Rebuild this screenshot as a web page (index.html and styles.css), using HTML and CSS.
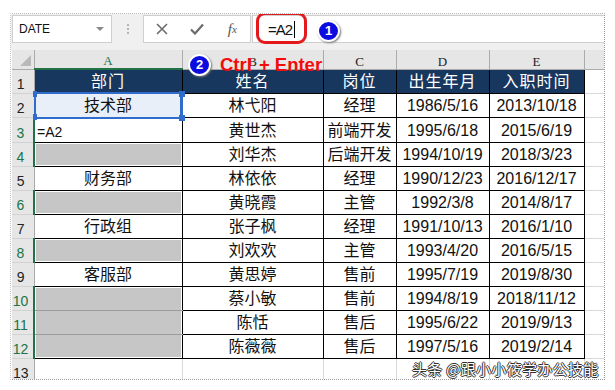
FILE: index.html
```html
<!DOCTYPE html>
<html lang="zh-CN">

<head>
    <meta charset="UTF-8">
    <title>Ctrl+Enter 批量填充</title>
    <link rel="stylesheet" href="styles.css">
</head>

<body>
    <!-- 截图外框 -->
    <div class="shot">
        <!-- 名称框 + 编辑栏 -->
        <div class="toolbar">
            <div class="namebox"><span>DATE</span><i class="caret"></i></div>
            <div class="grip"><i></i><i></i><i></i></div>
            <div class="fxbtns">
                <span class="btn">
                    <svg width="12" height="12" viewBox="0 0 12 12"><path d="M1 1 L11 11 M11 1 L1 11" stroke="#6b6b6b" stroke-width="1.6" fill="none"/></svg>
                </span>
                <span class="btn">
                    <svg width="14" height="12" viewBox="0 0 14 12"><path d="M1 6.5 L5 10.5 L13 1.5" stroke="#6b6b6b" stroke-width="2.2" fill="none"/></svg>
                </span>
                <span class="btn fx">f<sub>x</sub></span>
            </div>
            <div class="formula"><span>=A2</span><i class="cursor"></i></div>
        </div>

        <!-- 表格区域 -->
        <table class="grid">
            <colgroup>
                <col style="width:22px">
                <col style="width:148px">
                <col style="width:141px">
                <col style="width:73px">
                <col style="width:93px">
                <col style="width:95px">
                <col style="width:30px">
            </colgroup>
            <tr class="colhead">
                <th class="corner"></th>
                <th class="on">A</th>
                <th>B</th>
                <th>C</th>
                <th>D</th>
                <th>E</th>
                <th></th>
            </tr>
            <tr>
                <th class="rh">1</th>
                <td class="hd">部门</td>
                <td class="hd">姓名</td>
                <td class="hd">岗位</td>
                <td class="hd">出生年月</td>
                <td class="hd">入职时间</td>
                <td class="blank"></td>
            </tr>
            <tr>
                <th class="rh">2</th>
                <td class="ref">技术部
                    <span class="refbox"><i class="h tl"></i><i class="h tr"></i><i class="h bl"></i><i class="h br"></i></span>
                </td>
                <td>林弋阳</td>
                <td>经理</td>
                <td>1986/5/16</td>
                <td>2013/10/18</td>
                <td class="blank"></td>
            </tr>
            <tr>
                <th class="rh on">3</th>
                <td class="edit">=A2</td>
                <td>黄世杰</td>
                <td>前端开发</td>
                <td>1995/6/18</td>
                <td>2015/6/19</td>
                <td class="blank"></td>
            </tr>
            <tr>
                <th class="rh on">4</th>
                <td class="sel"></td>
                <td>刘华杰</td>
                <td>后端开发</td>
                <td>1994/10/19</td>
                <td>2018/3/23</td>
                <td class="blank"></td>
            </tr>
            <tr>
                <th class="rh">5</th>
                <td>财务部</td>
                <td>林依依</td>
                <td>经理</td>
                <td>1990/12/23</td>
                <td>2016/12/17</td>
                <td class="blank"></td>
            </tr>
            <tr>
                <th class="rh on">6</th>
                <td class="sel"></td>
                <td>黄晓霞</td>
                <td>主管</td>
                <td>1992/3/8</td>
                <td>2014/8/17</td>
                <td class="blank"></td>
            </tr>
            <tr>
                <th class="rh">7</th>
                <td>行政组</td>
                <td>张子枫</td>
                <td>经理</td>
                <td>1991/10/13</td>
                <td>2016/1/10</td>
                <td class="blank"></td>
            </tr>
            <tr>
                <th class="rh on">8</th>
                <td class="sel"></td>
                <td>刘欢欢</td>
                <td>主管</td>
                <td>1993/4/20</td>
                <td>2016/5/15</td>
                <td class="blank"></td>
            </tr>
            <tr>
                <th class="rh">9</th>
                <td>客服部</td>
                <td>黄思婷</td>
                <td>售前</td>
                <td>1995/7/19</td>
                <td>2019/8/30</td>
                <td class="blank"></td>
            </tr>
            <tr>
                <th class="rh on">10</th>
                <td class="sel st"></td>
                <td>蔡小敏</td>
                <td>售前</td>
                <td>1994/8/19</td>
                <td>2018/11/12</td>
                <td class="blank"></td>
            </tr>
            <tr>
                <th class="rh on">11</th>
                <td class="sel sm"></td>
                <td>陈恬</td>
                <td>售后</td>
                <td>1995/6/22</td>
                <td>2019/9/13</td>
                <td class="blank"></td>
            </tr>
            <tr>
                <th class="rh on">12</th>
                <td class="sel sb"></td>
                <td>陈薇薇</td>
                <td>售后</td>
                <td>1997/5/16</td>
                <td>2019/2/14</td>
                <td class="blank"></td>
            </tr>
            <tr>
                <th class="rh">13</th>
                <td class="blank"></td>
                <td class="blank"></td>
                <td class="blank"></td>
                <td class="blank"></td>
                <td class="blank"></td>
                <td class="blank"></td>
            </tr>
        </table>

        <!-- 标注 -->
        <span class="ring"></span>
        <span class="badge b1">1</span>
        <span class="badge b2">2</span>
        <div class="tip"><span class="ctrl">Ctrl</span>+ Enter</div>
        <div class="wm">头条 @跟小小筱学办公技能</div>
    </div>
</body>

</html>
```

FILE: styles.css
```css
* {
    margin: 0;
    padding: 0;
    box-sizing: border-box;
}

body {
    background-color: #fff;
    font-family: "Liberation Sans", "Noto Sans CJK SC", sans-serif;
}

/* 截图外框 撕边效果用虚线代替 */
.shot {
    position: relative;
    margin: 13px 0 0 10px;
    width: 595px;
    height: 367px;
    overflow: hidden;
    background-color: #fff;
    border-top: 1px dotted #b8b8b8;
    border-left: 1px dotted #c8c8c8;
    border-right: 1px dotted #9a9a9a;
    border-bottom: 1px dotted #9a9a9a;
}

/* 工具栏 */
.toolbar {
    display: flex;
    align-items: flex-start;
    height: 36px;
    padding: 1px 0 0 1px;
    background-color: #f0f0f0;
}

.namebox {
    display: flex;
    align-items: center;
    justify-content: space-between;
    width: 100px;
    height: 28px;
    padding: 0 7px 0 6px;
    background-color: #fff;
    border: 1px solid #cfcfcf;
    font-size: 12px;
    color: #111;
}

.caret {
    width: 0;
    height: 0;
    border-left: 4px solid transparent;
    border-right: 4px solid transparent;
    border-top: 4px solid #8a8a8a;
}

/* 分隔的三个小点 */
.grip {
    display: flex;
    flex-direction: column;
    align-items: center;
    justify-content: center;
    gap: 2px;
    width: 31px;
    height: 28px;
}

.grip i {
    width: 2px;
    height: 2px;
    background-color: #b5b5b5;
}

.fxbtns {
    display: flex;
    width: 108px;
    height: 28px;
    background-color: #fff;
    border: 1px solid #cfcfcf;
}

.btn {
    display: flex;
    align-items: center;
    justify-content: center;
    width: 36px;
}

.fx {
    font-family: "Liberation Serif", serif;
    font-style: italic;
    font-size: 15px;
    color: #555;
}

.fx sub {
    font-size: 11px;
    vertical-align: -1px;
}

.formula {
    display: flex;
    align-items: center;
    flex: 1;
    height: 28px;
    margin-left: 1px;
    padding-left: 15px;
    background-color: #fff;
    border: 1px solid #cfcfcf;
    border-right: none;
    font-size: 15px;
    letter-spacing: -1px;
    color: #111;
}

.cursor {
    width: 1px;
    height: 17px;
    margin-left: 2px;
    background-color: #000;
}

/* 表格 */
.grid {
    border-collapse: collapse;
    table-layout: fixed;
    width: 602px;
    margin-left: 1px;
}

.grid tr {
    height: 24px;
}

.grid td {
    border: 1px solid #000;
    text-align: center;
    font-size: 16px;
    line-height: 20px;
    padding-top: 2px;
    color: #111;
    white-space: nowrap;
    overflow: hidden;
}

/* 列标 */
.grid .colhead {
    height: 19px;
}

.colhead th {
    background-color: #e6e6e6;
    border-right: 1px solid #ababab;
    border-bottom: 1px solid #ababab;
    font-family: "Liberation Serif", serif;
    font-weight: normal;
    font-size: 13px;
    color: #222;
    vertical-align: bottom;
    line-height: 15px;
}

.colhead th.on {
    color: #217346;
    border-bottom: 2px solid #217346;
}

.colhead .corner {
    position: relative;
}

.colhead .corner::after {
    content: "";
    position: absolute;
    right: 3px;
    bottom: 3px;
    border-left: 11px solid transparent;
    border-bottom: 11px solid #b9b9b9;
}

/* 行号 */
.rh {
    background-color: #e6e6e6;
    border-right: 1px solid #ababab;
    border-bottom: 1px solid #d2d2d2;
    font-weight: normal;
    font-size: 14px;
    color: #222;
    text-align: center;
    padding-right: 4px;
    vertical-align: bottom;
    line-height: 17px;
}

.rh.on {
    color: #217346;
    border-right: 2px solid #217346;
}

/* 标题行 */
.grid td.hd {
    background-color: #17375e;
    color: #fff;
    letter-spacing: 1px;
}

.grid td.blank {
    border-color: #d9d9d9;
}

/* 被引用的A2 */
.grid td.ref {
    position: relative;
    background-color: #e9eff9;
    overflow: visible;
}

.refbox {
    position: absolute;
    left: -1px;
    top: -2px;
    right: -1px;
    bottom: -2px;
    border: 2px solid #2f6ccb;
    border-right-width: 3px;
}

.h {
    position: absolute;
    width: 6px;
    height: 6px;
    background-color: #2f6ccb;
}

.h.tl { left: -3px; top: -3px; width: 4px; }
.h.tr { right: -5px; top: -3px; }
.h.bl { left: -3px; bottom: -3px; width: 4px; }
.h.br { right: -5px; bottom: -4px; }

/* 正在编辑的单元格 */
.grid td.edit {
    text-align: left;
    font-size: 14px;
    padding-left: 2px;
    padding-top: 4px;
}

/* 定位选中的空单元格 */
.grid td.sel {
    background-color: #c6c6c6;
    box-shadow: inset 0 0 0 1px #fff;
}

.grid td.st {
    border-bottom-color: #9c9c9c;
    box-shadow: inset 1px 1px 0 #fff, inset -1px 0 0 #fff;
}

.grid td.sm {
    border-bottom-color: #9c9c9c;
    box-shadow: inset 1px 0 0 #fff, inset -1px 0 0 #fff;
}

.grid td.sb {
    box-shadow: inset 1px -1px 0 #fff, inset -1px 0 0 #fff;
}

/* 标注 */
.ring {
    position: absolute;
    left: 245px;
    top: -2px;
    width: 51px;
    height: 32px;
    border: 3px solid #e3191b;
    border-radius: 9px;
}

.badge {
    position: absolute;
    width: 23px;
    height: 22px;
    border-radius: 50%;
    background-color: #0c0cde;
    border: 2px solid #fff;
    box-shadow: 1px 1px 2px #777;
    color: #fff;
    font-weight: bold;
    font-size: 13px;
    line-height: 18px;
    text-align: center;
}

.b1 {
    left: 306px;
    top: 6px;
}

.b2 {
    left: 177px;
    top: 40px;
}

.tip {
    position: absolute;
    left: 209px;
    top: 40px;
    font-weight: bold;
    font-size: 18.5px;
    color: #f20c0c;
    white-space: nowrap;
}

.ctrl {
    margin-right: 7px;
}

/* 水印 */
.wm {
    position: absolute;
    left: 401px;
    top: 346px;
    font-family: "Noto Sans CJK SC", sans-serif;
    font-size: 15px;
    line-height: 18px;
    letter-spacing: 0.3px;
    color: #fff;
    white-space: nowrap;
    text-shadow: 1px 0 0 #333, -1px 0 0 #333, 0 1px 0 #333, 0 -1px 0 #333;
}
```
